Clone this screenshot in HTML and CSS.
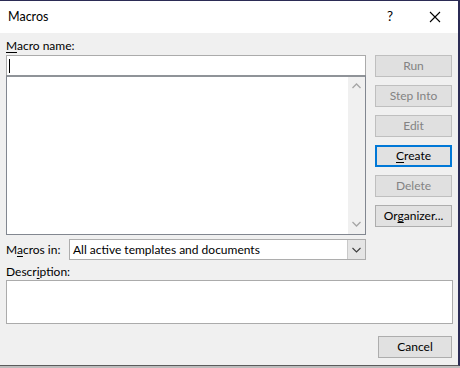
FILE: index.html
```html
<!DOCTYPE html>
<html>
<head>
<meta charset="utf-8">
<link rel="stylesheet" href="styles.css">
</head>
<body>
<div class="dialog">
  <div class="titlebar">
    <span class="title">Macros</span>
    <span class="help">?</span>
    <span class="close">
      <svg width="12" height="12" viewBox="0 0 12 12"><path d="M1 1L11 11M11 1L1 11" stroke="#000" stroke-width="1.1" fill="none"/></svg>
    </span>
  </div>
  <div class="content">
    <div class="main">
      <div class="left">
        <div class="label"><u>M</u>acro name:</div>
        <div class="input"><span class="caret"></span></div>
        <div class="list">
          <div class="scroll">
            <svg class="chev" width="9" height="6" viewBox="0 0 9 6"><path d="M0.5 5L4.5 1L8.5 5" stroke="#a6a6a6" stroke-width="1.3" fill="none"/></svg>
            <svg class="chev" width="9" height="6" viewBox="0 0 9 6"><path d="M0.5 1L4.5 5L8.5 1" stroke="#a6a6a6" stroke-width="1.3" fill="none"/></svg>
          </div>
        </div>
      </div>
      <div class="buttons">
        <div class="btn disabled">Run</div>
        <div class="btn disabled">Step Into</div>
        <div class="btn disabled">Edit</div>
        <div class="btn default"><u>C</u>reate</div>
        <div class="btn disabled">Delete</div>
        <div class="btn">Or<u>g</u>anizer...</div>
      </div>
    </div>
    <div class="inrow">
      <div class="inlabel">M<u>a</u>cros in:</div>
      <div class="select">
        <span class="seltext">All active templates and documents</span>
        <span class="drop">
          <svg width="9" height="6" viewBox="0 0 9 6"><path d="M0.5 1L4.5 5L8.5 1" stroke="#3c3c3c" stroke-width="1.1" fill="none"/></svg>
        </span>
      </div>
    </div>
    <div class="desclabel">Descr<u>i</u>ption:</div>
    <div class="desc"></div>
    <div class="footer">
      <div class="btn cancel">Cancel</div>
    </div>
  </div>
</div>
</body>
</html>
```
FILE: styles.css
```css
html, body {
  margin: 0;
  padding: 0;
  background: #bdbdbd;
  height: 368px;
  overflow: hidden;
}
body {
  font-family: "Lato", "Noto Sans", sans-serif;
  font-size: 12px;
  color: #000;
}
u { text-decoration: underline; text-underline-offset: 2px; }
.dialog {
  width: 458px;
  border-top: 1px solid #2b2b55;
  border-right: 2px solid #2b2b55;
  border-bottom: 1px solid #5c5c5c;
  background: #f0f0f0;
}
.titlebar {
  height: 32px;
  background: #fff;
  display: flex;
  align-items: center;
}
.title {
  margin-left: 8px;
  flex: 1;
  padding-bottom: 1px;
  font-size: 12.5px;
}
.help {
  width: 14px;
  margin-right: 28px;
  font-size: 13.5px;
  padding-bottom: 2px;
}
.close {
  width: 12px;
  height: 12px;
  margin-right: 17px;
  display: flex;
}
.content {
  padding: 5px 5px 7px 6px;
  display: flex;
  flex-direction: column;
}
.content > * { flex-shrink: 0; }
.main {
  display: flex;
  gap: 9px;
}
.left {
  width: 360px;
  display: flex;
  flex-direction: column;
}
.label {
  height: 15px;
  line-height: 15px;
  margin-bottom: 2px;
}
.input {
  height: 19px;
  border: 1px solid #ababab;
  border-bottom: none;
  background: #fff;
  display: flex;
  align-items: center;
}
.caret {
  width: 1px;
  height: 14px;
  background: #000;
  margin-left: 2px;
}
.list {
  height: 157px;
  border: 1px solid #828790;
  border-top: 2px solid #8f9398;
  background: #fff;
  display: flex;
  justify-content: flex-end;
}
.scroll {
  width: 17px;
  background: #f0f0f0;
  display: flex;
  flex-direction: column;
  justify-content: space-between;
  align-items: center;
  padding: 6px 0 7px;
}
.chev { display: block; }
.buttons {
  display: flex;
  flex-direction: column;
  gap: 8px;
  padding-top: 17px;
}
.btn {
  width: 77px;
  height: 22px;
  box-sizing: border-box;
  border: 1px solid #adadad;
  background: #e1e1e1;
  display: flex;
  align-items: center;
  justify-content: center;
  padding-bottom: 1px;
}
.btn.disabled {
  color: #838383;
  border-color: #bfbfbf;
  background: #e0e0e0;
}
.btn.default {
  border: 2px solid #0078d7;
}
.inrow {
  display: flex;
  align-items: center;
  margin-top: 4px;
  height: 21px;
}
.inlabel {
  width: 63px;
}
.select {
  width: 297px;
  height: 21px;
  box-sizing: border-box;
  border: 1px solid #adadad;
  background: #fff;
  display: flex;
  align-items: center;
}
.seltext {
  flex: 1;
  padding-left: 3px;
  padding-bottom: 1px;
}
.drop {
  width: 17px;
  height: 19px;
  background: #e5e5e5;
  border-left: 1px solid #c9c9c9;
  display: flex;
  align-items: center;
  justify-content: center;
}
.desclabel {
  margin-top: 4px;
  height: 16px;
  line-height: 16px;
}
.desc {
  width: 447px;
  height: 44px;
  box-sizing: border-box;
  border: 1px solid #ababab;
  background: #fff;
}
.footer {
  display: flex;
  justify-content: flex-end;
  margin-top: 12px;
  padding-right: 1px;
}
.btn.cancel {
  width: 74px;
}
```
